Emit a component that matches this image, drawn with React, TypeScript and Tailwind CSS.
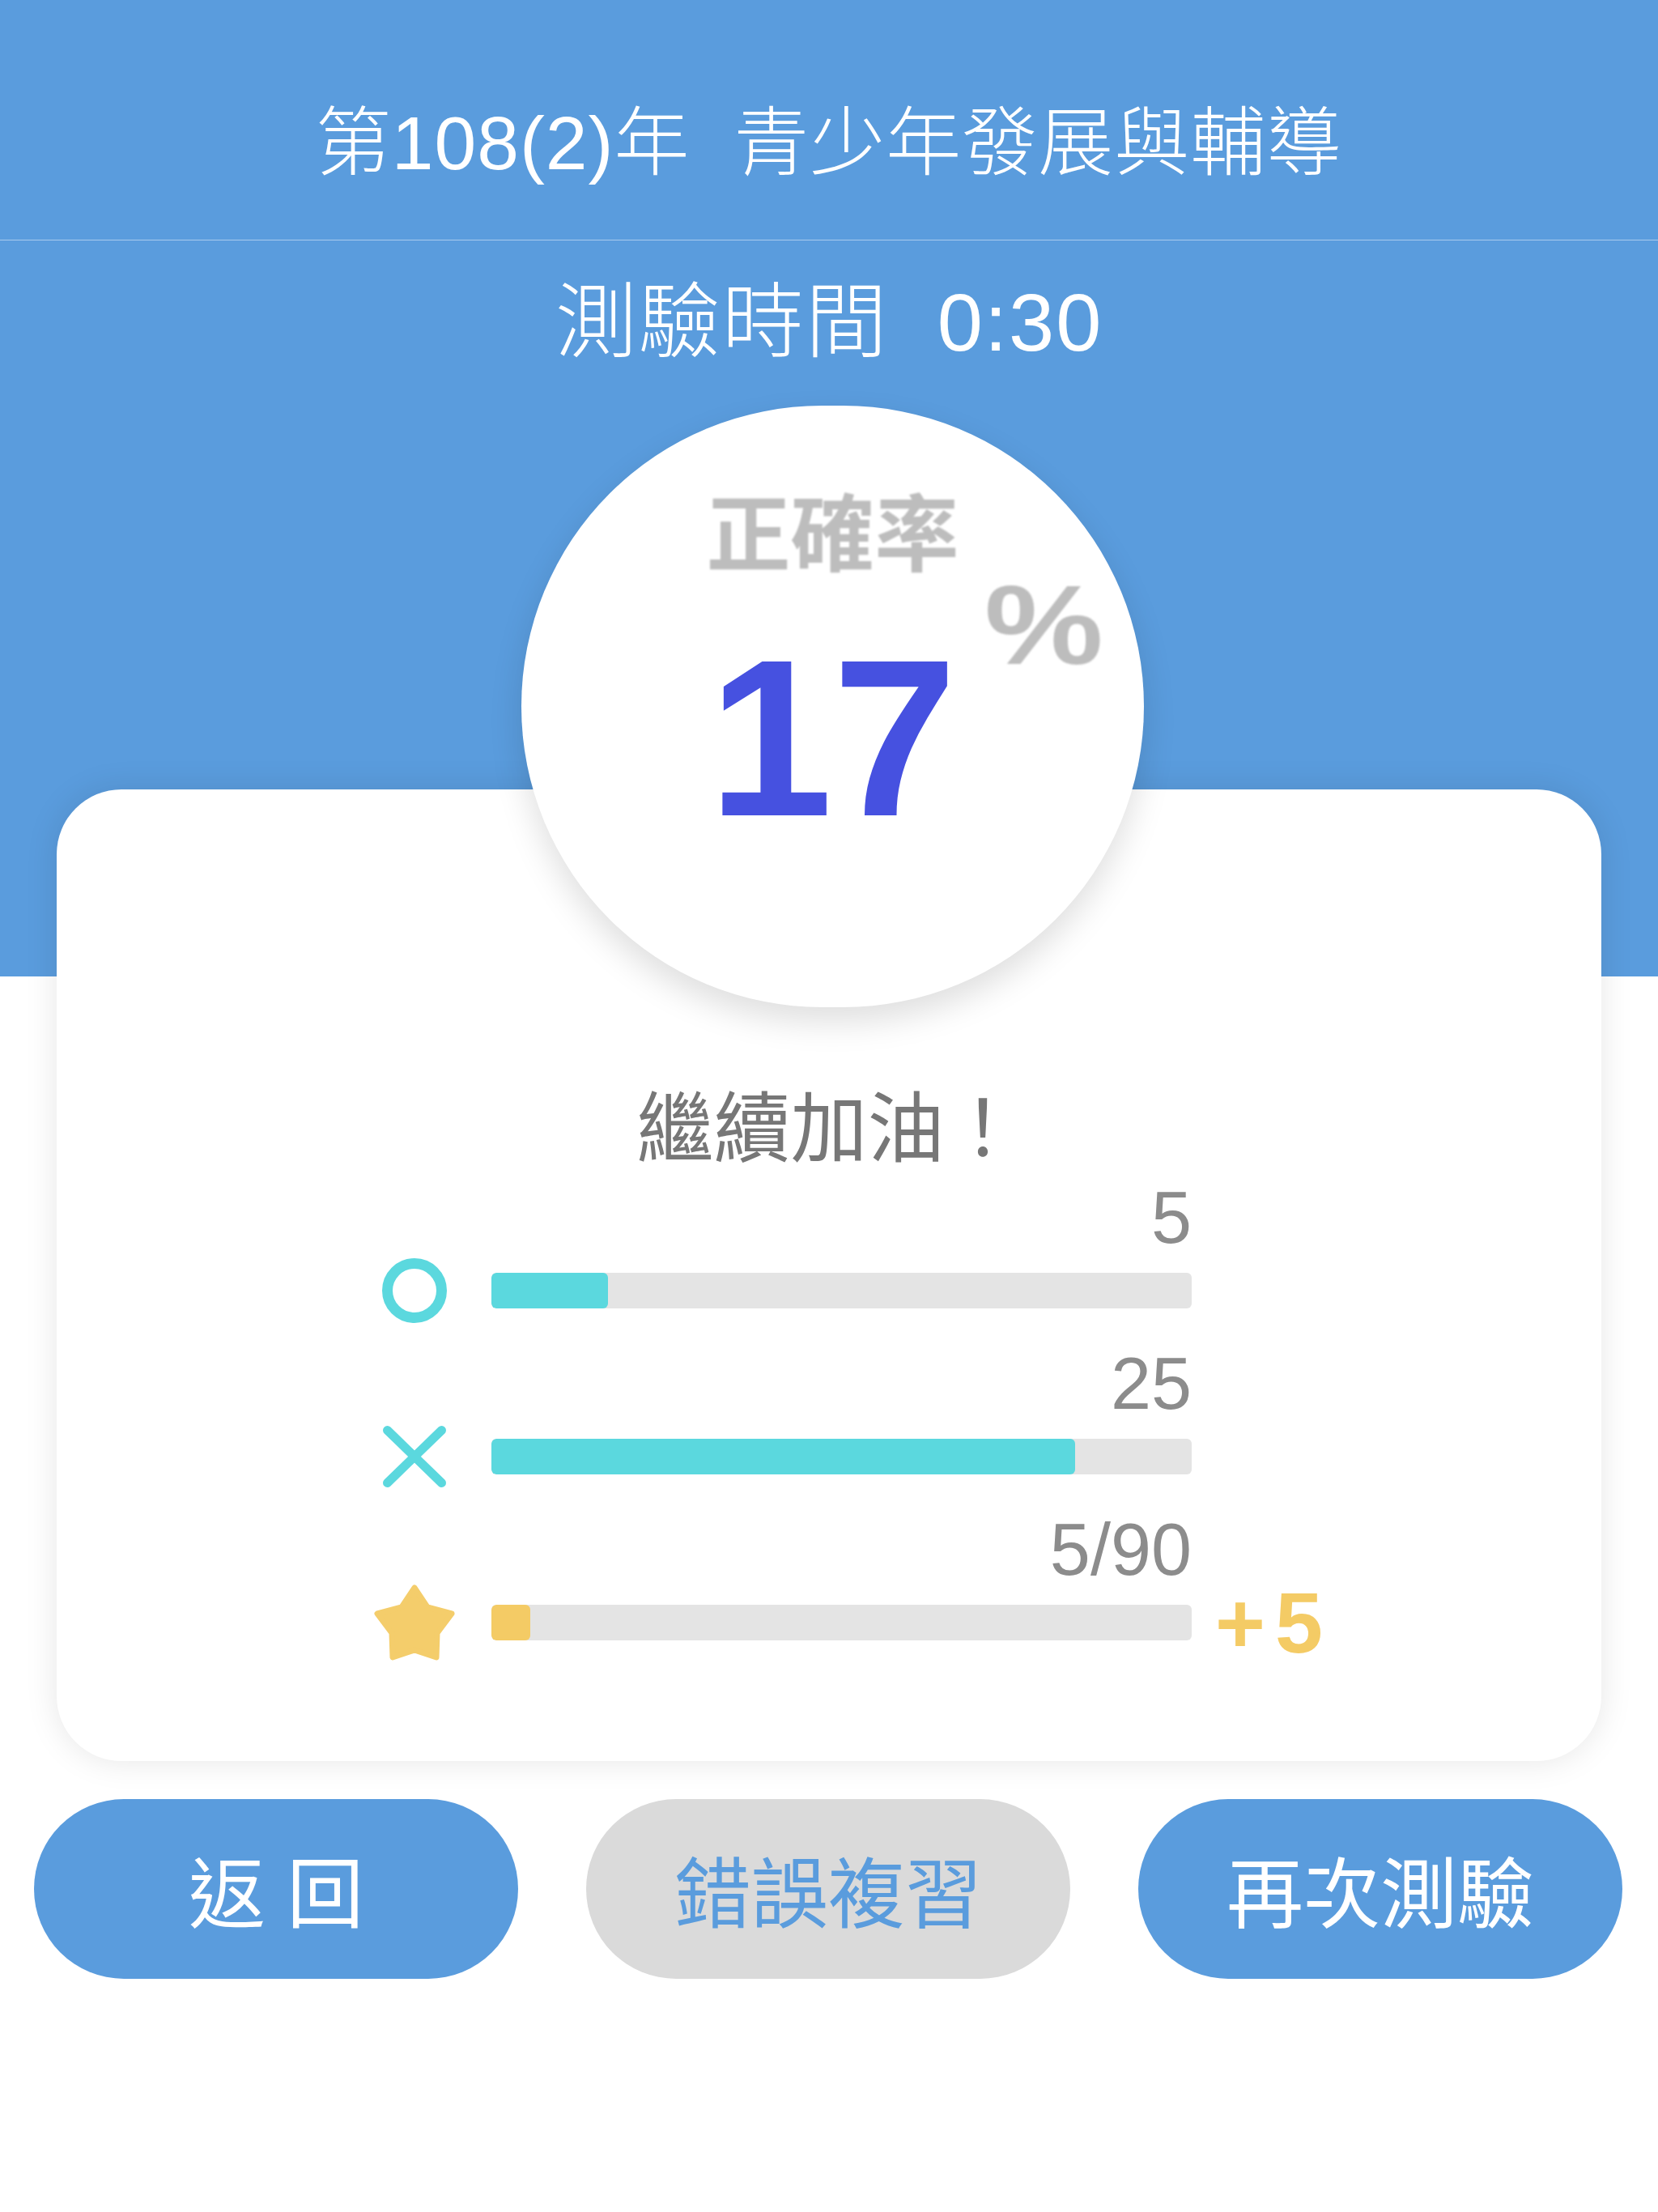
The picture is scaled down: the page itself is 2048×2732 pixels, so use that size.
import React from "react";

const FONT = "font-['Liberation_Sans','Noto_Sans_CJK_TC',sans-serif]";

function Ring() {
  return <div className="w-[80px] h-[80px] rounded-full border-[13px] border-[#5bd8de]" />;
}

function Cross() {
  return (
    <svg width="80" height="80" viewBox="0 0 80 80">
      <path d="M6.5 7.5 L73.5 72.5 M73.5 7.5 L6.5 72.5" stroke="#5bd8de" strokeWidth="11" strokeLinecap="round" fill="none" />
    </svg>
  );
}

function Star() {
  return (
    <svg width="104" height="98" viewBox="0 0 104 98" className="shrink-0">
      <polygon
        points="52,6 68,30 98,38 80,62 79,92 52,83 25,92 24,62 6,38 36,30"
        fill="#f4cd6b"
        stroke="#f4cd6b"
        strokeWidth="7"
        strokeLinejoin="round"
      />
    </svg>
  );
}

type RowProps = {
  label: string;
  icon: React.ReactNode;
  pct: number;
  color: string;
  extra?: React.ReactNode;
};

function Row({ label, icon, pct, color, extra }: RowProps) {
  return (
    <div className="flex flex-col">
      <div className="w-[1000px] text-right text-[90px] leading-[90px] text-[#8c8c8c]">{label}</div>
      <div className="mt-[5px] h-[80px] flex items-center">
        <div className="w-[80px] h-[80px] shrink-0 flex items-center justify-center">{icon}</div>
        <div className="ml-[55px] w-[865px] h-[44px] shrink-0 rounded-[6px] bg-[#e4e4e4] overflow-hidden">
          <div className="h-full rounded-[6px]" style={{ width: `${pct}%`, backgroundColor: color }} />
        </div>
        {extra}
      </div>
    </div>
  );
}

export default function App() {
  return (
    <div className={`${FONT} w-[2048px] min-h-[2732px] bg-white`}>
      {/* Header */}
      <div className="h-[1206px] bg-[#5a9cdd] flex flex-col">
        <div className="h-[297px] shrink-0 border-b border-[#a9caee] pt-[122px] text-center text-white text-[93px] leading-[110px] tracking-[1px] whitespace-pre font-light">
          第108(2)年  青少年發展與輔導
        </div>
        <div className="shrink-0 pt-[41px] text-center text-white text-[101px] leading-[120px] tracking-[2px] whitespace-pre font-light">
          測驗時間  0:30
        </div>
        <div className="relative z-10 shrink-0 mt-[43px] ml-[644px] w-[769px] h-[743px] rounded-full bg-white shadow-[0_18px_40px_rgba(0,0,0,0.13)] flex flex-col items-center">
          <div className="pt-[100px] font-['Noto_Sans_CJK_TC',sans-serif] font-bold text-[104px] leading-[104px] text-[#bdbdbd] blur-[1px]">
            正確率
          </div>
          <div className="relative mt-[68px] font-bold text-[276px] leading-[276px] text-[#4651e0]">
            17
            <span className="absolute left-[calc(100%+34px)] top-[-71px] text-[140px] leading-[140px] text-[#bdbdbd] origin-left scale-x-[1.18] blur-[1px]">
              %
            </span>
          </div>
        </div>
      </div>

      {/* Card */}
      <div className="relative mx-[70px] -mt-[231px] h-[1200px] bg-white rounded-[80px] shadow-[0_0_40px_rgba(0,0,0,0.10)]">
        <div className="pt-[370px] text-center text-[95px] leading-[100px] text-[#777777]">繼續加油！</div>
        <div className="mt-[14px] pl-[402px] flex flex-col gap-[30px]">
          <Row label="5" icon={<Ring />} pct={16.7} color="#5bd8de" />
          <Row label="25" icon={<Cross />} pct={83.3} color="#5bd8de" />
          <Row
            label="5/90"
            icon={<Star />}
            pct={5.6}
            color="#f4cb65"
            extra={
              <div className="ml-[29px] font-bold text-[106px] leading-[106px] text-[#f4cb65] tracking-[12px]">+5</div>
            }
          />
        </div>
      </div>

      {/* Buttons */}
      <div className="mt-[47px] px-[42px] flex gap-[84px]">
        <button className="w-[598px] h-[222px] shrink-0 rounded-full bg-[#5a9cdd] text-white text-[95px] leading-none pt-[16px] flex items-center justify-center whitespace-pre">
          返 回
        </button>
        <button className="w-[598px] h-[222px] shrink-0 rounded-full bg-[#dadada] text-[#5a9cdd] text-[95px] leading-none pt-[16px] flex items-center justify-center">
          錯誤複習
        </button>
        <button className="w-[598px] h-[222px] shrink-0 rounded-full bg-[#5a9cdd] text-white text-[95px] leading-none pt-[16px] flex items-center justify-center">
          再次測驗
        </button>
      </div>
    </div>
  );
}
